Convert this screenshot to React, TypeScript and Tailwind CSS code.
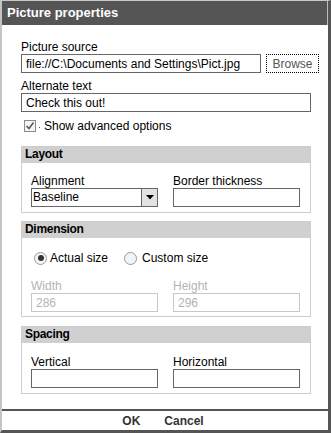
import React from 'react';

const font = { fontFamily: '"Liberation Sans", Arial, sans-serif' };

const TextBox = ({ value, width, disabled }: { value?: string; width: string; disabled?: boolean }) => (
  <div
    className={`${width} h-[19px] border flex items-center pl-[4px] text-[12px] leading-[14px] ${
      disabled ? 'border-[#c8c8c8] text-[#b4b4b4]' : 'border-[#666] text-black'
    }`}
  >
    {value}
  </div>
);

const Section = ({ title, children, pt, pb }: { title: string; children: React.ReactNode; pt: string; pb: string }) => (
  <div className="w-[290px] border border-[#cdcdcd]">
    <div className="h-[16px] bg-[#d0d0d0] pl-[3px] text-[12px] leading-[15px] font-bold text-black tracking-[-0.3px]">
      {title}
    </div>
    <div className={`pl-[9px] ${pt} ${pb}`}>{children}</div>
  </div>
);

const Label = ({ children, muted }: { children: React.ReactNode; muted?: boolean }) => (
  <div className={`h-[14px] text-[12px] leading-[14px] ${muted ? 'text-[#b4b4b4]' : 'text-black'}`}>{children}</div>
);

const Radio = ({ checked }: { checked?: boolean }) => (
  <span className="w-[13px] h-[13px] rounded-full border border-[#9a9a9a] bg-[#f4f4f4] flex items-center justify-center">
    {checked && <span className="w-[6px] h-[6px] rounded-full bg-[#333]" />}
  </span>
);

export default function App() {
  return (
    <div
      style={font}
      className="w-[331px] h-[433px] flex flex-col bg-white border-l-2 border-l-[#c4c4c4] border-t border-t-[#c8c8c8] border-r-[3px] border-r-[#555] border-b-[3px] border-b-[#555]"
    >
      <div className="h-[24px] bg-[#555] border-r border-r-[#bbb] pl-[5px] flex items-center text-white font-bold text-[13px]">
        Picture properties
      </div>

      <div className="h-[384px] pl-[19px] pt-[15px] flex flex-col">
        <Label>Picture source</Label>
        <div className="flex">
          <TextBox width="w-[240px]" value="file://C:\Documents and Settings\Pict.jpg" />
          <div className="ml-[5px] w-[53px] h-[19px] border border-dotted border-black flex items-center justify-center text-[12px] text-[#555]">
            Browse
          </div>
        </div>

        <div className="mt-[6px]">
          <Label>Alternate text</Label>
        </div>
        <TextBox width="w-[290px]" value="Check this out!" />

        <div className="mt-[7px] h-[14px] flex items-center pl-[3px]">
          <span className="w-[12px] h-[12px] border border-[#8a8a8a] bg-[#f6f6f6] flex items-center justify-center">
            <svg width="10" height="10" viewBox="0 0 10 10">
              <path d="M1.5 5 L4 7.5 L8.5 1.5" fill="none" stroke="#555" strokeWidth="1.5" />
            </svg>
          </span>
          <span className="ml-[3px] w-[1px] h-[1px] bg-[#555] mt-[3px]" />
          <span className="ml-[4px] text-[12px] leading-[14px] text-black">Show advanced options</span>
        </div>

        <div className="mt-[13px]">
          <Section title="Layout" pt="pt-[11px]" pb="pb-[5px]">
            <div className="grid grid-cols-[127px_127px] gap-x-[15px]">
              <Label>Alignment</Label>
              <Label>Border thickness</Label>
              <div className="h-[19px] border border-[#666] flex items-stretch">
                <div className="flex-1 pl-[1px] text-[12px] leading-[17px] text-black">Baseline</div>
                <div className="w-[16px] border-l border-[#666] bg-[#e2e2e2] flex items-center justify-center">
                  <svg width="8" height="5" viewBox="0 0 8 5">
                    <path d="M0 0 L8 0 L4 4.5 Z" fill="#000" />
                  </svg>
                </div>
              </div>
              <TextBox width="w-[127px]" />
            </div>
          </Section>
        </div>

        <div className="mt-[8px]">
          <Section title="Dimension" pt="pt-[13px]" pb="pb-[4px]">
            <div className="h-[14px] flex items-center pl-[3px] text-[12px] text-black">
              <Radio checked />
              <span className="ml-[3px]">Actual size</span>
              <span className="ml-[16px]">
                <Radio />
              </span>
              <span className="ml-[5px]">Custom size</span>
            </div>
            <div className="mt-[14px] grid grid-cols-[127px_127px] gap-x-[15px]">
              <Label muted>Width</Label>
              <Label muted>Height</Label>
              <TextBox width="w-[127px]" value="286" disabled />
              <TextBox width="w-[127px]" value="296" disabled />
            </div>
          </Section>
        </div>

        <div className="mt-[9px]">
          <Section title="Spacing" pt="pt-[12px]" pb="pb-[5px]">
            <div className="grid grid-cols-[127px_127px] gap-x-[15px]">
              <Label>Vertical</Label>
              <Label>Horizontal</Label>
              <TextBox width="w-[127px]" />
              <TextBox width="w-[127px]" />
            </div>
          </Section>
        </div>
      </div>

      <div className="h-[21px] border-t-2 border-t-[#555] flex items-center justify-center gap-[24px] pr-[4px] text-[12px] font-bold text-[#333]">
        <span>OK</span>
        <span>Cancel</span>
      </div>
    </div>
  );
}
